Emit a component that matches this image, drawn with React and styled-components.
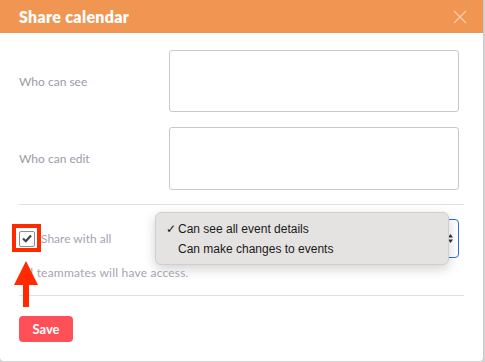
import React from 'react'
import styled, { createGlobalStyle } from 'styled-components'

const Global = createGlobalStyle`
    html, body {
        margin: 0;
        padding: 0;
        background: #d4d4d4;
    }
    body {
        font-family: Lato, "Noto Sans", sans-serif;
    }
`

const Dialog = styled.div`
    width: 484px;
    height: 361px;
    background: #fff;
    border-radius: 0 0 4px 4px;
    border-right: 1px solid #c9c9c9;
    box-sizing: border-box;
    display: flex;
    flex-direction: column;
`

const Header = styled.div`
    height: 33px;
    background: #f09552;
    display: flex;
    align-items: center;
    justify-content: space-between;
    padding: 0 16px 0 19px;
    color: #fff;
`

const Title = styled.h2`
    margin: 0;
    font-size: 16px;
    font-weight: 800;
    letter-spacing: 0.3px;
`

const Close = styled.button`
    background: none;
    border: none;
    padding: 0;
    width: 14px;
    height: 14px;
    display: flex;
    opacity: 0.55;
`

const Body = styled.div`
    padding: 17px 19px 0 19px;
    display: flex;
    flex-direction: column;
`

const Field = styled.div`
    display: grid;
    grid-template-columns: 150px 290px;
    align-items: center;
    margin-bottom: ${p => p.last ? '14px' : '15px'};
`

const Label = styled.label`
    font-size: 12px;
    color: #9b9ba8;
`

const Area = styled.div`
    height: ${p => p.h}px;
    border: 1px solid #c8c8c8;
    border-radius: 3px;
    box-sizing: border-box;
`

const Rule = styled.hr`
    margin: 0;
    border: none;
    border-top: 1px solid #e0e0e0;
`

const ShareRow = styled.div`
    display: flex;
    align-items: center;
    height: 39px;
    margin-top: 14px;
    position: relative;
`

const CheckWrap = styled.label`
    display: flex;
    align-items: center;
    gap: 6px;
    width: 136px;
    font-size: 12px;
    color: #a5a5b0;
    position: relative;
`

const Check = styled.span`
    width: 14px;
    height: 14px;
    border: 1px solid #8e8e8e;
    border-radius: 2px;
    display: flex;
    align-items: center;
    justify-content: center;
    background: #fff;
`

const Highlight = styled.span`
    position: absolute;
    left: -7px;
    top: -7px;
    width: 21px;
    height: 20px;
    border: 4px solid #ff2a00;
`

const Select = styled.div`
    width: 304px;
    height: 39px;
    border: 1px solid #2f6fe0;
    border-radius: 4px;
    box-sizing: border-box;
    display: flex;
    align-items: center;
    justify-content: flex-end;
    padding-right: 4px;
`

const Menu = styled.ul`
    position: absolute;
    left: 136px;
    top: -7px;
    width: 292px;
    margin: 0;
    padding: 6px 0 5px;
    list-style: none;
    background: #e4e3e2;
    border: 1px solid #cfcfcf;
    border-radius: 6px;
    box-shadow: 0 4px 12px rgba(0, 0, 0, 0.18);
    font-family: "Liberation Sans", Arial, sans-serif;
    font-size: 12px;
    color: #1a1a1a;
`

const Item = styled.li`
    height: 20px;
    line-height: 20px;
    padding-left: 22px;
    position: relative;
`

const Tick = styled.span`
    position: absolute;
    left: 10px;
`

const Help = styled.p`
    margin: 7px 0 15px;
    font-size: 12px;
    letter-spacing: 0.2px;
    color: #a5a5b0;
    position: relative;
`

const Arrow = styled.svg`
    position: absolute;
    left: -6px;
    top: -4px;
`

const Footer = styled.div`
    padding: 20px 0 0;
`

const SaveButton = styled.button`
    background: #ff5057;
    color: #fff;
    border: none;
    border-radius: 4px;
    width: 54px;
    height: 26px;
    font-family: Lato, "Noto Sans", sans-serif;
    font-size: 13px;
    font-weight: 700;
`

export default function App() {
    return (
        <>
            <Global />
            <Dialog>
                <Header>
                    <Title>Share calendar</Title>
                    <Close aria-label="close">
                        <svg width="14" height="14" viewBox="0 0 14 14">
                            <path d="M1 1L13 13M13 1L1 13" stroke="#fff" strokeWidth="1.2" />
                        </svg>
                    </Close>
                </Header>
                <Body>
                    <Field>
                        <Label>Who can see</Label>
                        <Area h={62} />
                    </Field>
                    <Field last>
                        <Label>Who can edit</Label>
                        <Area h={63} />
                    </Field>
                    <Rule />
                    <ShareRow>
                        <CheckWrap>
                            <Check>
                                <svg width="10" height="9" viewBox="0 0 10 9">
                                    <path d="M1 4.5L3.8 7.2L9 1.5" stroke="#444" strokeWidth="2.2" fill="none" />
                                </svg>
                            </Check>
                            Share with all
                            <Highlight />
                        </CheckWrap>
                        <Select>
                            <svg width="7" height="11" viewBox="0 0 7 11">
                                <path d="M3.5 1L6 4.5H1Z M3.5 10L6 6.5H1Z" fill="#333" />
                            </svg>
                        </Select>
                        <Menu>
                            <Item><Tick>✓</Tick>Can see all event details</Item>
                            <Item>Can make changes to events</Item>
                        </Menu>
                    </ShareRow>
                    <Help>
                        All teammates will have access.
                        <Arrow width="26" height="46" viewBox="0 0 26 46">
                            <path d="M13 0L25 24H16V46H10V24H1Z" fill="#ff2a00" />
                        </Arrow>
                    </Help>
                    <Rule />
                    <Footer>
                        <SaveButton>Save</SaveButton>
                    </Footer>
                </Body>
            </Dialog>
        </>
    )
}
